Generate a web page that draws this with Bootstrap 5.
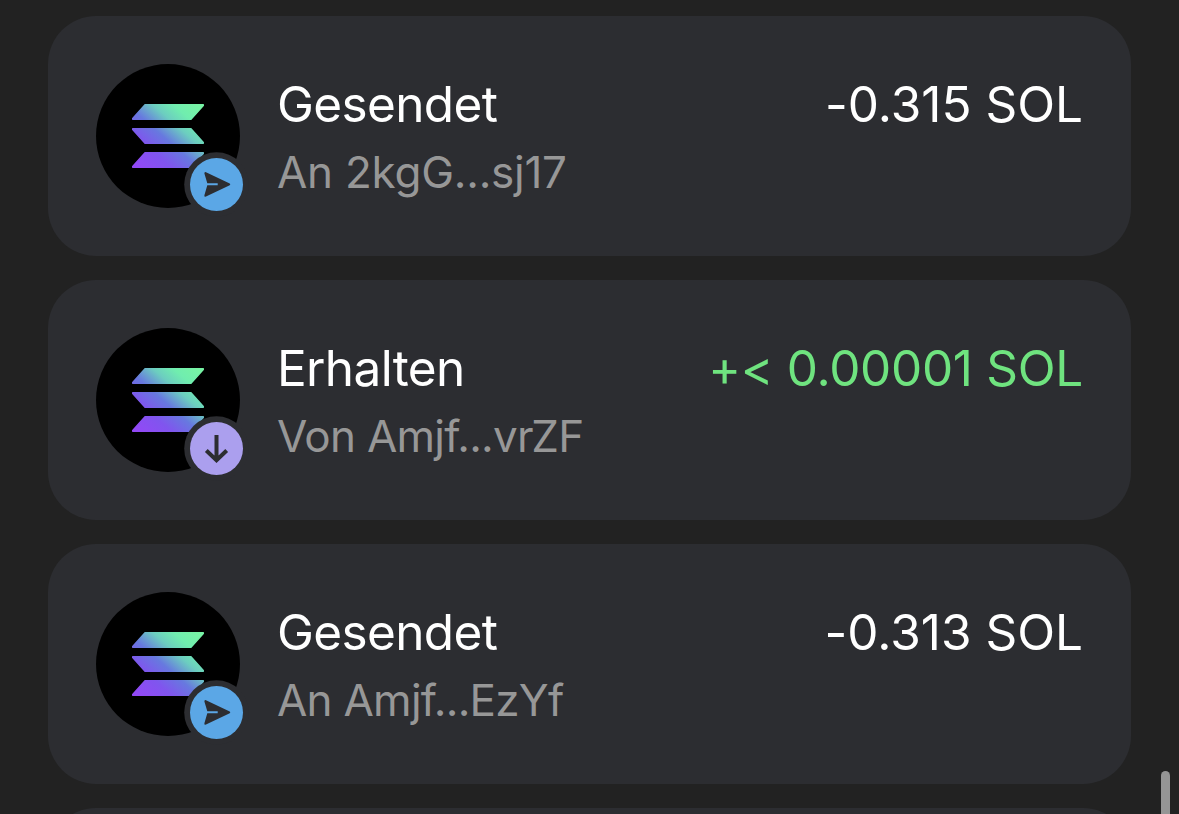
<!DOCTYPE html>
<html lang="de" data-bs-theme="dark">
<head>
<meta charset="utf-8">
<meta name="viewport" content="width=device-width, initial-scale=1">
<title>Transaktionen</title>
<link href="https://cdn.jsdelivr.net/npm/bootstrap@5.3.0/dist/css/bootstrap.min.css" rel="stylesheet">
<style>
  body { background: #222; color: #fff; font-family: Inter, "Liberation Sans", sans-serif; font-feature-settings: "calt" 0; }
  .history { height: 814px; padding: 16px 48px 0; gap: 24px; }
  .tx { height: 240px; border-radius: 48px; background: #2c2d31; padding: 48px; --bs-card-border-width: 0; gap: 37px; }
  .tx-next { height: 6px; padding: 0; background: none; border-radius: 0; overflow: hidden; }
  .tx-next::before { content: ""; flex: none; height: 240px; border-radius: 48px; background: #2c2d31; }
  .token { width: 144px; height: 144px; }
  .token-badge { left: 88px; top: 88px; width: 65px; height: 65px; }
  .tx-text { padding-top: 8px; }
  .tx-title, .tx-amount { font-size: 49.5px; line-height: 65px; white-space: nowrap; }
  .tx-title { letter-spacing: -.65px; }
  .tx-sub { font-size: 44px; line-height: 56px; margin-top: 7px; color: #979797; white-space: nowrap; letter-spacing: -.75px; }
  .tx-sub.loose { letter-spacing: -.25px; }
  .received { color: #6fe37f; letter-spacing: -.3px; }
  .scroll-thumb { right: 9px; top: 771px; width: 9px; height: 43px; background: #959595; }
</style>
</head>
<body class="overflow-hidden">
<svg width="0" height="0" class="position-absolute" aria-hidden="true">
  <defs>
    <linearGradient id="sol" gradientUnits="userSpaceOnUse" x1="44" y1="104" x2="100" y2="40">
      <stop offset="0" stop-color="#9249f6"/><stop offset=".25" stop-color="#8055ee"/>
      <stop offset=".46" stop-color="#6779df"/><stop offset=".66" stop-color="#6ccdc0"/><stop offset=".82" stop-color="#70edaf"/>
      <stop offset="1" stop-color="#77f3a5"/>
    </linearGradient>
    <symbol id="token" viewBox="0 0 144 144">
      <circle cx="72" cy="72" r="72" fill="#000"/>
      <g fill="url(#sol)" stroke="url(#sol)" stroke-width="1.4" stroke-linejoin="round">
        <path d="M49 40.7H107.3V41.5L95 55.3H36.7V54.5Z"/>
        <path d="M36.7 64.7H95L107.3 78.5V79.3H49L36.7 65.5Z"/>
        <path d="M49 88.7H107.3V89.5L95 103.3H36.7V102.5Z"/>
      </g>
    </symbol>
    <symbol id="sent" viewBox="0 0 65 65">
      <circle cx="32.5" cy="32.5" r="32.3" fill="#2c2d31"/><circle cx="32.5" cy="32.5" r="26.5" fill="#5ba7e6"/>
      <path d="M22 20.2 45.2 31.2Q47.3 32.4 45.2 33.6L22 44.6Q20 45.2 20.4 43.2L23.3 33.3H33.7V31.3H23.3L20.4 21.6Q20.2 19.6 22 20.2Z" fill="#2c2d31"/>
    </symbol>
    <symbol id="recv" viewBox="0 0 65 65">
      <circle cx="32.5" cy="32.5" r="32.3" fill="#2c2d31"/><circle cx="32.5" cy="32.5" r="26.5" fill="#ab9fee"/>
      <path d="M32.5 19V44M22.3 34.5 32.5 44.2 42.7 34.5" fill="none" stroke="#2c2d31" stroke-width="4"/>
    </symbol>
  </defs>
</svg>
<main class="history d-flex flex-column overflow-hidden">
  <article class="card tx flex-row flex-shrink-0">
    <div class="token position-relative flex-shrink-0">
      <svg class="d-block" width="144" height="144"><use href="#token"/></svg>
      <svg class="token-badge position-absolute"><use href="#sent"/></svg>
    </div>
    <div class="tx-text flex-grow-1">
      <div class="d-flex justify-content-between"><span class="tx-title">Gesendet</span><span class="tx-amount">-0.315 SOL</span></div>
      <div class="tx-sub loose">An 2kgG...sj17</div>
    </div>
  </article>
  <article class="card tx flex-row flex-shrink-0">
    <div class="token position-relative flex-shrink-0">
      <svg class="d-block" width="144" height="144"><use href="#token"/></svg>
      <svg class="token-badge position-absolute"><use href="#recv"/></svg>
    </div>
    <div class="tx-text flex-grow-1">
      <div class="d-flex justify-content-between"><span class="tx-title">Erhalten</span><span class="tx-amount received">+&lt; 0.00001 SOL</span></div>
      <div class="tx-sub">Von Amjf...vrZF</div>
    </div>
  </article>
  <article class="card tx flex-row flex-shrink-0">
    <div class="token position-relative flex-shrink-0">
      <svg class="d-block" width="144" height="144"><use href="#token"/></svg>
      <svg class="token-badge position-absolute"><use href="#sent"/></svg>
    </div>
    <div class="tx-text flex-grow-1">
      <div class="d-flex justify-content-between"><span class="tx-title">Gesendet</span><span class="tx-amount">-0.313 SOL</span></div>
      <div class="tx-sub">An Amjf...EzYf</div>
    </div>
  </article>
  <article class="card tx tx-next flex-shrink-0"></article>
</main>
<div class="scroll-thumb position-absolute rounded-top-5"></div>
<script src="https://cdn.jsdelivr.net/npm/bootstrap@5.3.0/dist/js/bootstrap.bundle.min.js"></script>
</body>
</html>
